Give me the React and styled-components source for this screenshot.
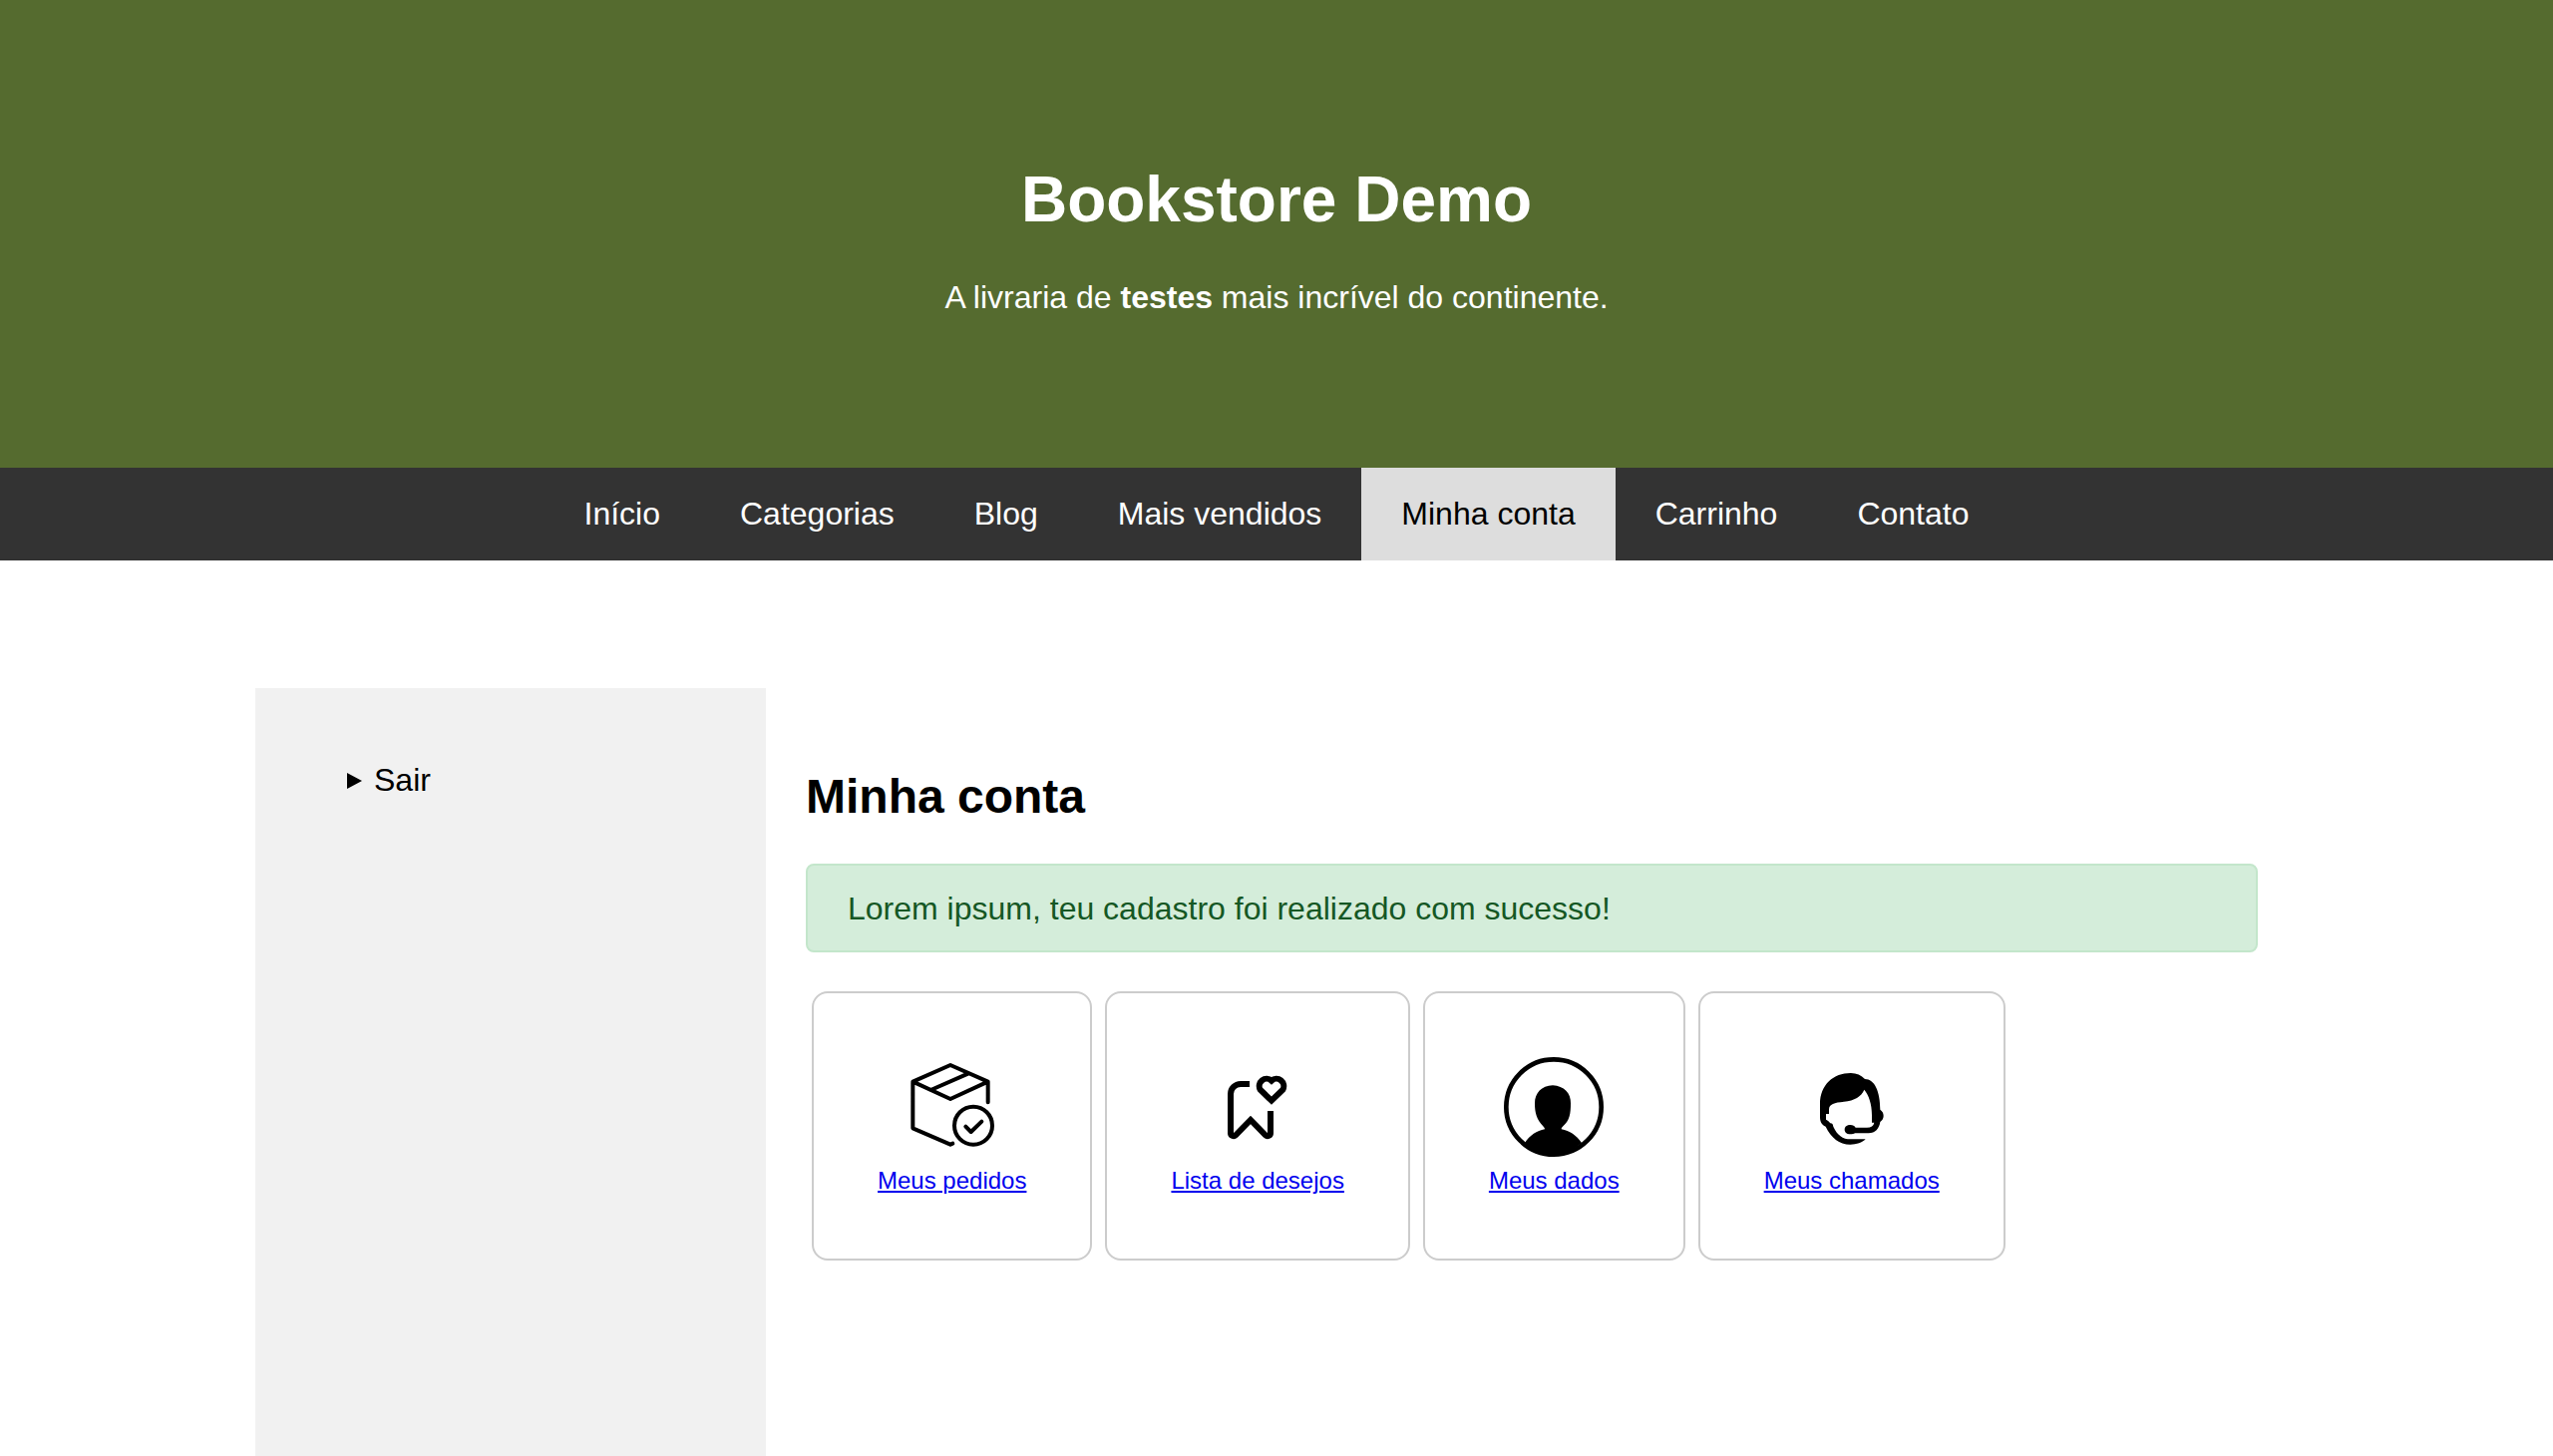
import React from "react";
import styled, { createGlobalStyle } from "styled-components";

const GlobalStyle = createGlobalStyle`
  *, *::before, *::after { box-sizing: border-box; }
  body {
    margin: 0;
    background: #fff;
    color: #000;
    font: 32px/37px "Liberation Sans", Arial, sans-serif;
  }
`;

const Page = styled.div`
  display: flex;
  flex-direction: column;
  min-height: 100vh;
`;

const Hero = styled.header`
  padding: 163px 40px 152px;
  text-align: center;
  color: #fff;
  background: #556b2f;
`;

const SiteTitle = styled.h1`
  margin: 0 0 43px;
  font-size: 64px;
  line-height: 74px;
`;

const Tagline = styled.p`
  margin: 0;
`;

const NavBar = styled.nav`
  display: flex;
  flex-wrap: wrap;
  justify-content: center;
  background: #333;
`;

const NavLink = styled.a`
  padding: 28px 40px;
  text-decoration: none;
  color: ${(p) => (p.$active ? "#000" : "#fff")};
  background: ${(p) => (p.$active ? "#ddd" : "transparent")};
`;

const Columns = styled.div`
  flex: 1;
  display: flex;
  padding: 5% 10% 0;
`;

const Sidebar = styled.aside`
  flex: 0 0 25%;
  padding: 74px 40px;
  background: #f1f1f1;
`;

const SideMenu = styled.ul`
  margin: 0;
  padding: 0 52px;
  list-style: none;
`;

const SideItem = styled.li`
  display: flex;
  align-items: center;
  gap: 12px;
`;

const SideMarker = styled.svg`
  width: 15px;
  height: 16px;
`;

const SideLink = styled.a`
  color: inherit;
  text-decoration: none;
`;

const Main = styled.main`
  flex: 1;
  min-width: 0;
  padding: 80px 40px;
`;

const Heading = styled.h2`
  margin: 0 0 38px;
  font-size: 48px;
  line-height: 58px;
`;

const Alert = styled.div`
  margin-bottom: 39px;
  padding: 25px 40px 23px;
  border: 2px solid #c3e6cb;
  border-radius: 8px;
  color: #155724;
  background: #d4edda;
`;

const CardList = styled.div`
  display: flex;
  flex-wrap: wrap;
  gap: 13px;
  padding: 0 6px;
`;

const Card = styled.div`
  display: flex;
  flex-direction: column;
  align-items: center;
  gap: 10px;
  padding: 64px;
  border: 2px solid #ccc;
  border-radius: 16px;
`;

const CardIcon = styled.svg`
  display: block;
  width: 100px;
  height: 100px;
`;

const CardLink = styled.a`
  font-size: 24px;
  line-height: 28px;
  color: #00e;
`;

const OrderIcon = () => (
  <CardIcon viewBox="0 0 300 300" fill="none" stroke="#000" strokeWidth="12" strokeLinecap="round" strokeLinejoin="round" aria-hidden="true">
    <path d="M31 74 144 24l113 50-113 52zM85 99l112-49M31 74v140l113 49 7-3M257 74v62" />
    <circle cx="213" cy="206" r="57" />
    <path d="m190 209 16 16 32-31" />
  </CardIcon>
);

const WishlistIcon = () => (
  <CardIcon viewBox="0 0 300 300" fill="none" stroke="#000" strokeWidth="18" aria-hidden="true">
    <path d="M126 81H99a30 30 0 0 0-30 30v117a9 9 0 0 0 15 7l45-46 45 46a9 9 0 0 0 15-7v-66" />
    <path d="M192 131 158 98a22 22 0 0 1 34-27 22 22 0 0 1 34 27z" />
  </CardIcon>
);

const ProfileIcon = () => (
  <CardIcon viewBox="0 0 300 300" aria-hidden="true">
    <circle cx="150" cy="150" r="143" fill="none" stroke="#000" strokeWidth="14" />
    <path d="M147 85c34 2 55 24 54 54 0 32-3 51-23 69-4 4-5 6-5 9 25 5 45 18 61 41-24 21-53 34-84 34s-62-12-87-34c15-23 36-36 60-41 0-3-2-5-5-9-19-20-25-38-25-69 0-30 20-53 54-54z" />
  </CardIcon>
);

const SupportIcon = () => (
  <CardIcon viewBox="0 0 300 300" aria-hidden="true">
    <path d="M147 48c17 0 31 6 42 18 29 0 46 37 46 92 6 4 10 10 10 19 0 8-4 14-10 18-3 20-15 34-35 34h-41c-3 2-8 3-14 3-10 0-17-6-17-14 0-9 7-14 17-14 8 0 13 3 16 8h34c13 0 20-5 22-15h-7v-23c0-33-9-59-23-76-9 21-29 33-61 36-29 3-44 7-45 23v14h-9v17c6 3 9 6 13 11 7 0 7 3 9 10 12 26 28 38 52 38h45c-10 10-27 16-46 16-33 0-58-21-74-54-11-4-17-14-17-28v-40c0-58 41-93 92-93z" />
  </CardIcon>
);

const navItems = ["Início", "Categorias", "Blog", "Mais vendidos", "Minha conta", "Carrinho", "Contato"];

const cards = [
  { label: "Meus pedidos", Icon: OrderIcon },
  { label: "Lista de desejos", Icon: WishlistIcon },
  { label: "Meus dados", Icon: ProfileIcon },
  { label: "Meus chamados", Icon: SupportIcon },
];

export default function App() {
  return (
    <Page>
      <GlobalStyle />
      <Hero>
        <SiteTitle>Bookstore Demo</SiteTitle>
        <Tagline>
          A livraria de <b>testes</b> mais incrível do continente.
        </Tagline>
      </Hero>
      <NavBar>
        {navItems.map((item) => (
          <NavLink key={item} href="#" $active={item === "Minha conta"}>
            {item}
          </NavLink>
        ))}
      </NavBar>
      <Columns>
        <Sidebar>
          <SideMenu>
            <SideItem>
              <SideMarker viewBox="0 0 15 16" aria-hidden="true">
                <path d="M0 0 15 8 0 16z" />
              </SideMarker>
              <SideLink href="#">Sair</SideLink>
            </SideItem>
          </SideMenu>
        </Sidebar>
        <Main>
          <Heading>Minha conta</Heading>
          <Alert role="status">Lorem ipsum, teu cadastro foi realizado com sucesso!</Alert>
          <CardList>
            {cards.map(({ label, Icon }) => (
              <Card key={label}>
                <Icon />
                <CardLink href="#">{label}</CardLink>
              </Card>
            ))}
          </CardList>
        </Main>
      </Columns>
    </Page>
  );
}
